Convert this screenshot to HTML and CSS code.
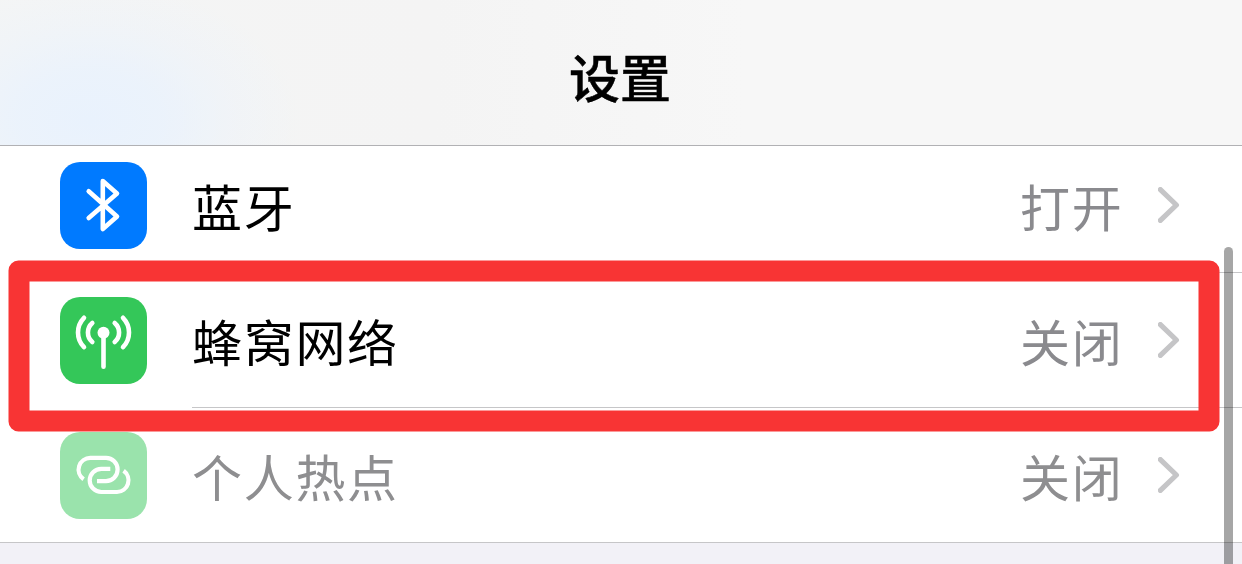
FILE: index.html
```html
<!DOCTYPE html>
<html lang="zh-CN">
<head>
<meta charset="utf-8">
<title>设置</title>
<link rel="stylesheet" href="styles.css">
</head>
<body>
<div class="screen">
  <header class="navbar"><h1>设置</h1></header>

  <ul class="list">
    <li class="row">
      <svg class="icon blue" viewBox="0 0 87 87">
        <path class="line" d="M28.7 29.3 57 54.5 42.8 67V19L57 31.4 28.7 56"/>
      </svg>
      <div class="cell">
        <span class="label">蓝牙</span>
        <span class="value">打开</span>
        <svg class="chevron" viewBox="0 0 22 36"><path d="M2.4 2.6 18.4 18 2.4 33.4"/></svg>
      </div>
    </li>
    <li class="row">
      <svg class="icon green" viewBox="0 0 87 87">
        <path class="line" d="M43.5 36V69.8M32.3 26A12.5 12.5 0 0 0 32.3 45M54.7 26A12.5 12.5 0 0 1 54.7 45M24 20.8A21 21 0 0 0 24 50.2M63 20.8A21 21 0 0 1 63 50.2"/>
        <circle cx="43.5" cy="35.8" r="6" fill="#fff"/>
      </svg>
      <div class="cell">
        <span class="label">蜂窝网络</span>
        <span class="value">关闭</span>
        <svg class="chevron" viewBox="0 0 22 36"><path d="M2.4 2.6 18.4 18 2.4 33.4"/></svg>
      </div>
    </li>
    <li class="row disabled">
      <svg class="icon mint" viewBox="0 0 87 87">
        <path class="link" d="M23.6 47.2A11.7 11.7 0 0 1 30.4 25.9H46A11.6 11.6 0 0 1 46 49.1H37"/>
        <path class="link" d="M50.3 36.8H41.3A11.6 11.6 0 0 0 41.3 60H57A11.7 11.7 0 0 0 63.6 38.8"/>
      </svg>
      <div class="cell">
        <span class="label">个人热点</span>
        <span class="value">关闭</span>
        <svg class="chevron" viewBox="0 0 22 36"><path d="M2.4 2.6 18.4 18 2.4 33.4"/></svg>
      </div>
    </li>
  </ul>

  <div class="highlight"></div>
  <div class="scrollbar"></div>
</div>
</body>
</html>
```

FILE: styles.css
```css
* { box-sizing: border-box; }
body {
  margin: 0;
  font-family: "Noto Sans CJK SC", sans-serif;
  background: #f2f1f7;
}
.screen {
  position: relative;
  height: 564px;
  overflow: hidden;
}

.navbar {
  position: relative;
  z-index: 1;
  height: 146px;
  padding: 7px 2px 0 0;
  display: flex;
  align-items: center;
  justify-content: center;
  border-bottom: 1px solid #b1b1b4;
  background:
    radial-gradient(ellipse 210px 140px at 90px 120px, #e9f2fd 0%, rgba(233,242,253,.8) 35%, rgba(233,242,253,.3) 68%, rgba(233,242,253,0) 100%),
    linear-gradient(90deg, #f4f5f5, #f4f4f4 35%, #f7f7f7 60%);
}
.navbar h1 {
  margin: 0;
  font-size: 51px;
  font-weight: 500;
  line-height: 74px;
  color: #000;
  -webkit-text-stroke: .5px #000;
}

.list {
  margin: -8px 0 0;
  padding: 0;
  list-style: none;
  background: #fff;
}
.row {
  display: flex;
  align-items: center;
  height: 135px;
  padding-left: 60px;
}
.row:last-child { border-bottom: 1px solid #c6c6c8; }
.icon {
  flex: none;
  width: 87px;
  height: 87px;
  border-radius: 20px;
}
.blue { background: #007aff; }
.green { background: #34c759; }
.mint { background: #9ae3ac; }
.line, .link {
  fill: none;
  stroke: #fff;
  stroke-width: 4.6;
  stroke-linecap: round;
  stroke-linejoin: round;
}
.link {
  stroke-width: 4.2;
  stroke-linecap: butt;
}

.cell {
  flex: 1;
  display: flex;
  align-items: center;
  height: 135px;
  margin-left: 45px;
  padding-right: 62px;
  border-bottom: 1px solid #c6c6c8;
}
.row:last-child .cell { border-bottom: 0; }
.label, .value {
  font-size: 50px;
  line-height: 74px;
  letter-spacing: 1.7px;
}
.label { color: #000; }
.value {
  margin-left: auto;
  margin-right: 34.5px;
  color: #8a8a8e;
}
.disabled .label, .disabled .value { color: #8e8e90; }
.chevron {
  width: 22px;
  height: 36px;
}
.chevron path {
  fill: none;
  stroke: #c5c5c7;
  stroke-width: 5.2;
  stroke-linecap: round;
  stroke-linejoin: round;
}

.highlight {
  position: absolute;
  left: 8px;
  top: 260px;
  width: 1211px;
  height: 171px;
  border: 21px solid #f83434;
  border-radius: 10px;
  transform: translate(.5px, .5px);
}
.scrollbar {
  position: absolute;
  left: 1224px;
  top: 247px;
  width: 9px;
  height: 340px;
  border-radius: 4.5px;
  background: rgba(0,0,0,.35);
}
```
